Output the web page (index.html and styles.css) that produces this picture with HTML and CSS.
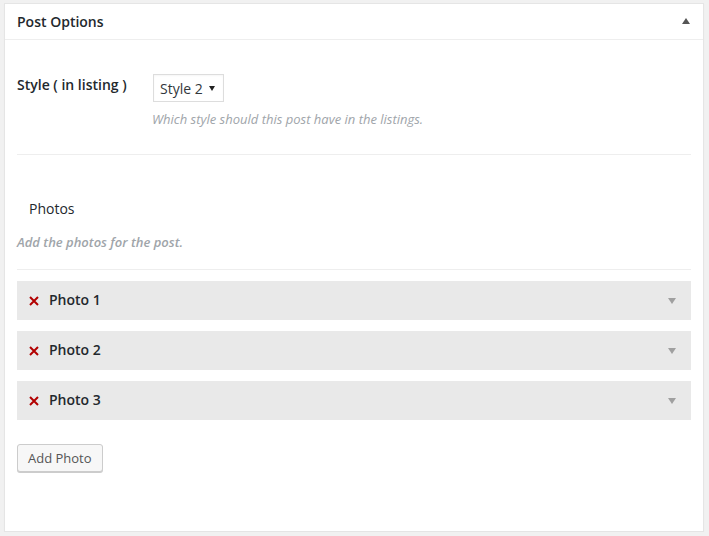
FILE: index.html
```html
<!DOCTYPE html>
<html>
<head>
<meta charset="utf-8">
<title>Post Options</title>
<link rel="stylesheet" href="styles.css">
</head>
<body>
<div class="wrap">
  <div class="postbox">
    <div class="postbox-header">
      <h2 class="postbox-title">Post Options</h2>
      <span class="toggle-up"></span>
    </div>
    <div class="inside">
      <div class="field-row">
        <label class="field-label">Style ( in listing )</label>
        <div class="field-control">
          <div class="select-box"><span>Style 2</span><span class="select-arrow"></span></div>
          <p class="field-desc">Which style should this post have in the listings.</p>
        </div>
      </div>
      <div class="separator sep-1"></div>
      <div class="group-title">Photos</div>
      <p class="group-desc">Add the photos for the post.</p>
      <div class="separator sep-2"></div>
      <div class="photo-list">
        <div class="photo-row">
          <svg class="remove-icon" width="10" height="10" viewBox="0 0 10 10"><path d="M1 1 L9 9 M9 1 L1 9" stroke="#b20000" stroke-width="2" stroke-linecap="butt"/></svg>
          <span class="photo-name">Photo 1</span>
          <span class="toggle-down"></span>
        </div>
        <div class="photo-row">
          <svg class="remove-icon" width="10" height="10" viewBox="0 0 10 10"><path d="M1 1 L9 9 M9 1 L1 9" stroke="#b20000" stroke-width="2" stroke-linecap="butt"/></svg>
          <span class="photo-name">Photo 2</span>
          <span class="toggle-down"></span>
        </div>
        <div class="photo-row">
          <svg class="remove-icon" width="10" height="10" viewBox="0 0 10 10"><path d="M1 1 L9 9 M9 1 L1 9" stroke="#b20000" stroke-width="2" stroke-linecap="butt"/></svg>
          <span class="photo-name">Photo 3</span>
          <span class="toggle-down"></span>
        </div>
      </div>
      <button class="add-btn" type="button">Add Photo</button>
    </div>
  </div>
</div>
</body>
</html>
```
FILE: styles.css
```css
* { box-sizing: border-box; }
html, body {
  margin: 0;
  padding: 0;
  background: #f1f1f1;
  font-family: "Open Sans", "Noto Sans", sans-serif;
  color: #23282d;
}
.wrap {
  padding: 3px 5px 0 4px;
}
.postbox {
  background: #fff;
  border: 1px solid #e5e5e5;
  box-shadow: 0 1px 1px rgba(0,0,0,0.04);
}
.postbox-header {
  height: 36px;
  border-bottom: 1px solid #eee;
  display: flex;
  align-items: center;
  justify-content: space-between;
  padding: 0 13px 0 12px;
}
.postbox-title {
  margin: 0;
  font-size: 14px;
  font-weight: 600;
  line-height: 35px;
  color: #23282d;
}
.toggle-up {
  width: 0;
  height: 0;
  border-left: 4px solid transparent;
  border-right: 4px solid transparent;
  border-bottom: 6px solid #555;
  margin-bottom: 2px;
}
.inside {
  padding: 0 12px 59px 12px;
}
.field-row {
  display: flex;
  margin-top: 34px;
}
.field-label {
  width: 136px;
  flex: none;
  font-size: 14px;
  font-weight: 600;
  line-height: 20px;
  margin-top: 1px;
}
.select-box {
  width: 71px;
  height: 28px;
  border: 1px solid #ddd;
  display: flex;
  align-items: center;
  justify-content: space-between;
  padding: 0 8px 0 6px;
  font-size: 14px;
  color: #32373c;
  box-shadow: inset 0 1px 2px rgba(0,0,0,0.04);
}
.select-box span:first-child {
  margin-top: 1px;
}
.select-arrow {
  width: 0;
  height: 0;
  border-left: 3px solid transparent;
  border-right: 3px solid transparent;
  border-top: 5px solid #222;
}
.field-desc {
  margin: 8px 0 0 -1px;
  font-size: 13px;
  font-style: italic;
  line-height: 18px;
  color: #a0a5aa;
}
.separator {
  height: 1px;
  background: #eee;
}
.sep-1 { margin-top: 26px; }
.group-title {
  margin-top: 44px;
  padding-left: 12px;
  font-size: 14px;
  line-height: 20px;
}
.group-desc {
  margin: 14px 0 0 0;
  font-size: 13px;
  font-style: italic;
  font-weight: 600;
  line-height: 18px;
  color: #a0a5aa;
}
.sep-2 { margin-top: 18px; }
.photo-list {
  margin-top: 11px;
  display: flex;
  flex-direction: column;
  gap: 11px;
}
.photo-row {
  height: 39px;
  background: #e9e9e9;
  display: flex;
  align-items: center;
  padding: 0 15px 0 12px;
}
.remove-icon {
  flex: none;
  margin-top: 1px;
}
.photo-name {
  margin-left: 10px;
  padding-bottom: 2px;
  font-size: 14px;
  font-weight: 600;
  color: #23282d;
  flex: 1;
}
.toggle-down {
  width: 0;
  height: 0;
  border-left: 4px solid transparent;
  border-right: 4px solid transparent;
  border-top: 6px solid #a0a0a0;
}
.add-btn {
  display: block;
  margin-top: 24px;
  height: 28px;
  padding: 0 10px;
  font-family: "Open Sans", "Noto Sans", sans-serif;
  font-size: 13px;
  line-height: 26px;
  color: #555;
  background: #f7f7f7;
  border: 1px solid #ccc;
  border-radius: 3px;
  box-shadow: 0 1px 0 #ccc;
}
```
